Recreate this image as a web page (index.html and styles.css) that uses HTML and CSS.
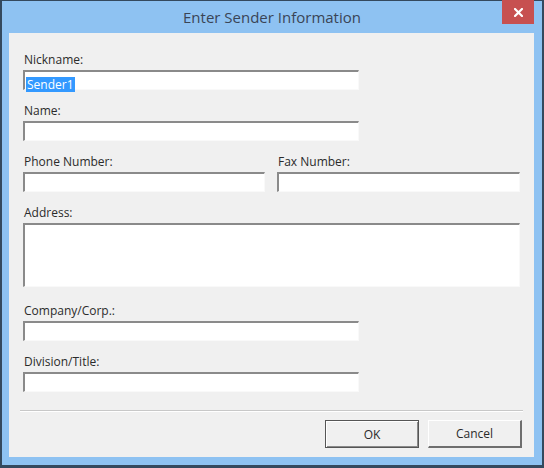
FILE: index.html
```html
<!DOCTYPE html>
<html lang="en">
<head>
  <meta charset="UTF-8" />
  <title>Enter Sender Information</title>
  <link rel="stylesheet" href="styles.css">
</head>
<body>
  <div class="window" role="dialog" aria-labelledby="dlg-title">
    <div class="titlebar">
      <span></span>
      <h1 id="dlg-title" class="title">Enter Sender Information</h1>
      <button class="close" aria-label="Close">
        <svg width="9" height="9" viewBox="0 0 9 9"><path d="M1 1 L8 8 M8 1 L1 8" stroke="#fff" stroke-width="2.2" stroke-linecap="square"/></svg>
      </button>
    </div>

    <div class="client">
      <div class="form">
        <div class="field narrow">
          <label>Nickname:</label>
          <div class="textbox"><span class="selected">Sender1</span></div>
        </div>
        <div class="field narrow">
          <label>Name:</label>
          <div class="textbox"></div>
        </div>
        <div class="row">
          <div class="field">
            <label>Phone Number:</label>
            <div class="textbox"></div>
          </div>
          <div class="field">
            <label>Fax Number:</label>
            <div class="textbox"></div>
          </div>
        </div>
        <div class="field address">
          <label>Address:</label>
          <div class="textbox multi"></div>
        </div>
        <div class="field narrow">
          <label>Company/Corp.:</label>
          <div class="textbox"></div>
        </div>
        <div class="field narrow">
          <label>Division/Title:</label>
          <div class="textbox"></div>
        </div>
      </div>

      <div class="separator"></div>

      <div class="actions">
        <button class="btn default">OK</button>
        <button class="btn">Cancel</button>
      </div>
    </div>
  </div>
</body>
</html>
```

FILE: styles.css
```css
/* Variables & Reset */
:root {
  --frame: #8ec2f2;
  --frame-edge: #34495e;
  --face: #f0f0f0;
  --text: #2b2b2b;
  --shade: #8a8a8a;
  --highlight: #3399ff;
}
* { margin: 0; padding: 0; box-sizing: border-box; }
body { background: #fff; font-family: 'Open Sans', 'Noto Sans', sans-serif; color: var(--text); }

/* Window frame */
.window { width: 544px; height: 468px; background: var(--frame); border: 2px solid var(--frame-edge); border-top-width: 1px; border-bottom-width: 3px; display: flex; flex-direction: column; }

/* Title bar */
.titlebar { height: 32px; display: grid; grid-template-columns: 1fr auto 1fr; align-items: center; }
.title { font-size: 15px; font-weight: 400; color: #3a4556; line-height: 20px; white-space: nowrap; }
.close { justify-self: end; align-self: start; margin: -1px 8px 0 0; width: 32px; height: 24px; border: none; background: #c75050; display: flex; align-items: center; justify-content: center; }
.close svg { display: block; }

/* Client area */
.client { flex: 1; margin: 0 8px 8px 7px; background: var(--face); padding: 19px 14px 9px; display: flex; flex-direction: column; }

.form { display: flex; flex-direction: column; gap: 13px; }
.field { display: flex; flex-direction: column; gap: 2px; }
.field label { font-size: 12px; line-height: 16px; padding-left: 1px; }
.field.narrow { width: 336px; }
.field.address { margin-bottom: 3px; }
.row { display: grid; grid-template-columns: 242px 243px; column-gap: 12px; }

/* Sunken text boxes */
.textbox { height: 20px; background: #fff; border-style: solid; border-width: 2px 1px 1px 2px; border-color: var(--shade) #f9f9f9 #f9f9f9 var(--shade); padding: 0 1px; }
.textbox.multi { height: 64px; }
.selected { display: inline-block; background: var(--highlight); color: #fff; font-size: 12px; line-height: 15px; padding: 0 1px; }

/* Footer */
.separator { height: 2px; margin: 18px -3px 0; border-top: 1px solid #c8c8c8; border-bottom: 1px solid #fff; }
.actions { margin: 8px -2px 0 0; display: flex; justify-content: flex-end; gap: 9px; }
.btn { width: 94px; height: 28px; font-family: inherit; font-size: 12px; color: var(--text); background: var(--face); border-style: solid; border-width: 1px 2px 2px 1px; border-color: #fff #6e6e6e #6e6e6e #fff; }
.btn.default { border: 1px solid #555; box-shadow: inset 1px 1px 0 #fff, inset -1px -1px 0 #8a8a8a; }
```
